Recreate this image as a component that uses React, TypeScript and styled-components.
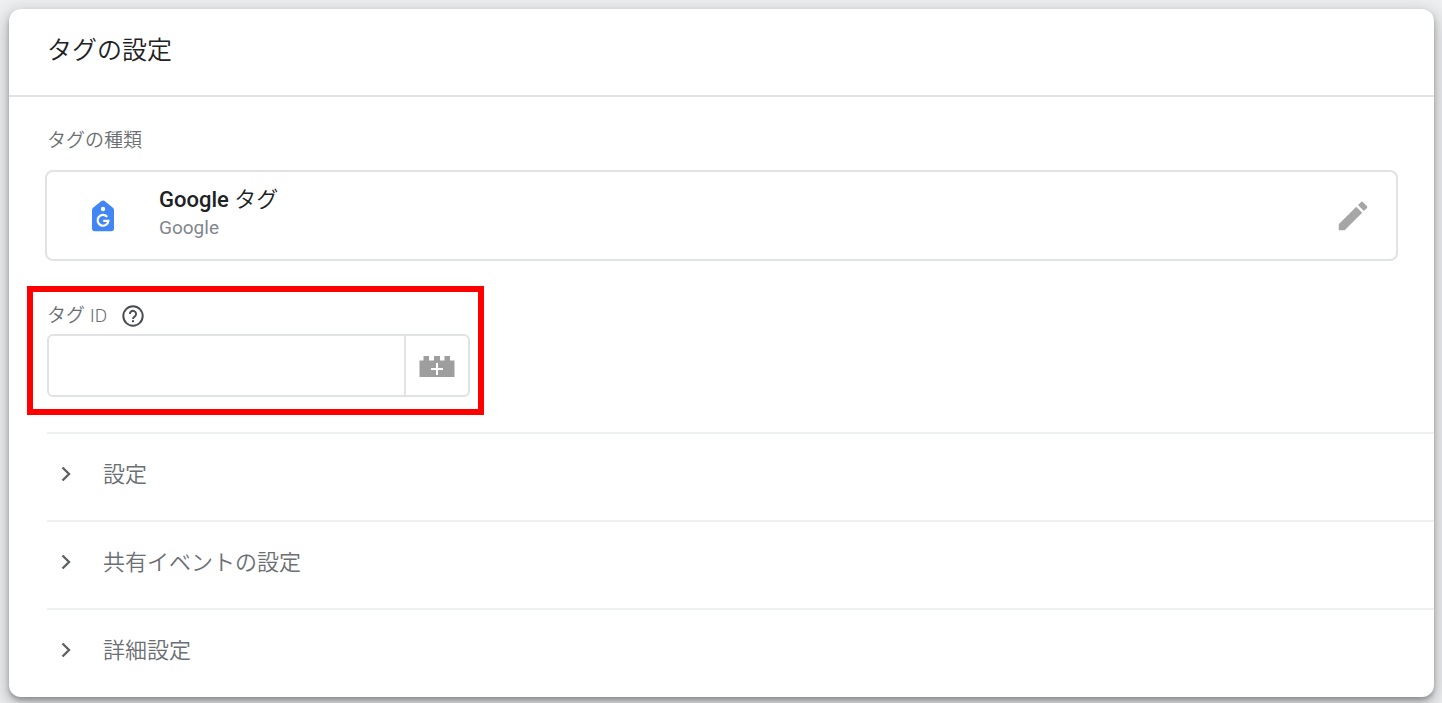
import React from "react";
import styled, { createGlobalStyle } from "styled-components";

const GlobalStyle = createGlobalStyle`
  *, *::before, *::after { box-sizing: border-box; }
  body {
    margin: 0;
    background: #eff0f2;
    font-family: Roboto, "Noto Sans CJK JP", sans-serif;
    font-weight: 350;
    color: #202124;
  }
  button, input { font: inherit; color: inherit; }
`;

const Page = styled.main`
  padding: 9px 8px 6px 9px;
`;

const Card = styled.section`
  background: #fff;
  border-radius: 12px;
  box-shadow: 0 3px 4px rgba(60, 64, 67, 0.35), 0 6px 18px 2px rgba(60, 64, 67, 0.35);
  overflow: hidden;
`;

const Header = styled.header`
  display: flex;
  align-items: center;
  height: 88px;
  padding: 0 38px 2px;
  border-bottom: 2px solid #e1e2e6;
`;

const Title = styled.h1`
  margin: 0;
  font-size: 25px;
  line-height: 36px;
  font-weight: 350;
`;

const TypeBlock = styled.div`
  padding: 30px 36px 0;
`;

const Label = styled.label`
  font-size: 19px;
  line-height: 28px;
  color: #6b6f73;
`;

const TypeLabel = styled.div`
  padding-left: 2px;
  margin-bottom: 15px;
  font-size: 19px;
  line-height: 28px;
  color: #6b6f73;
`;

const TypeButton = styled.button`
  display: flex;
  align-items: center;
  width: 100%;
  height: 91px;
  padding: 0 24px 0 44px;
  border: 2px solid #e1e2e6;
  border-radius: 8px;
  background: #fff;
  text-align: left;
  cursor: pointer;
`;

const TypeText = styled.span`
  display: flex;
  flex: 1;
  flex-direction: column;
  margin-left: 44px;
  padding-bottom: 6px;
`;

const TypeName = styled.span`
  font-size: 22px;
  line-height: 30px;
  color: #202124;

  b { font-weight: 500; }
`;

const TypeVendor = styled.span`
  font-size: 19px;
  line-height: 26px;
  font-weight: 400;
  color: #80868b;
`;

const Field = styled.div`
  width: 457px;
  max-width: calc(100% - 36px);
  margin: 25px 18px 17px;
  padding: 10px 8px 12px 14px;
  border: 6px solid #f00;
`;

const FieldHead = styled.div`
  display: flex;
  align-items: center;
  gap: 14px;
  margin-bottom: 4px;
`;

const HelpButton = styled.button`
  display: flex;
  padding: 0;
  border: 0;
  background: none;
  cursor: pointer;
`;

const InputGroup = styled.div`
  display: flex;
  height: 63px;
  border: 2px solid #e1e2e6;
  border-radius: 6px;
`;

const TextInput = styled.input`
  flex: 1;
  min-width: 0;
  padding: 0 16px;
  border: 0;
  border-radius: 6px;
  background: transparent;
  font-size: 22px;
`;

const VariableButton = styled.button`
  display: flex;
  align-items: center;
  justify-content: center;
  width: 64px;
  padding: 0;
  border: 0;
  border-left: 2px solid #e1e2e6;
  background: none;
  cursor: pointer;
`;

const Sections = styled.div`
  margin-left: 38px;
  padding-bottom: 1px;
`;

const SectionButton = styled.button`
  display: flex;
  align-items: center;
  gap: 31px;
  width: 100%;
  height: 88px;
  padding: 0 13px 4px;
  border: 0;
  border-top: 2px solid #eeeff1;
  background: none;
  font-size: 22px;
  line-height: 32px;
  color: #6b6f73;
  text-align: left;
  cursor: pointer;

  svg { margin-bottom: 2px; }
`;

const TagIcon = () => (
  <svg width="24" height="32" viewBox="0 0 24 32" aria-hidden="true">
    <path d="M12 0.5c.8 0 1.3.3 1.900.8l8 6.500c.7.6 1.100 1.300 1.100 2.200v18.500c0 1.700-1.100 2.700-2.700 2.700H3.700C2.100 31.200 1 30.200 1 28.500V10c0-.9.4-1.600 1.100-2.200l8-6.500c.6-.5 1.100-.8 1.900-.8z" fill="#4285f4" />
    <circle cx="12" cy="9" r="2.200" fill="#fff" />
    <path d="M16.200 16.900a5.400 5.400 0 1 0 1.200 3.900H12.200" fill="none" stroke="#fff" strokeWidth="2.200" />
  </svg>
);

const PencilIcon = () => (
  <svg width="38" height="38" viewBox="0 0 24 24" fill="#a6a6a6" aria-hidden="true">
    <path d="M3 17.250V21h3.750L17.810 9.940l-3.750-3.750L3 17.250zM20.710 7.040c.39-.39.39-1.020 0-1.410l-2.340-2.340c-.39-.39-1.020-.39-1.410 0l-1.830 1.830 3.750 3.750 1.830-1.830z" />
  </svg>
);

const HelpIcon = () => (
  <svg width="24" height="24" viewBox="0 0 24 24" fill="none" aria-hidden="true">
    <circle cx="12" cy="12" r="9.700" stroke="#4a4e52" strokeWidth="2" />
    <path d="M8.900 10a3.100 3.100 0 1 1 5.200 2.200c-1.200 1-2.100 1.500-2.100 2.900" stroke="#4a4e52" strokeWidth="1.900" />
    <rect x="11" y="16.200" width="2" height="2" fill="#4a4e52" />
  </svg>
);

const BrickIcon = () => (
  <svg width="36" height="22" viewBox="0 0 36 22" aria-hidden="true">
    <path d="M0.500 5.500h4V1H10v4.500h5V1h6v4.500h4.500V1h5.500v4.500h4.500V22h-35z" fill="#9e9e9e" />
    <path d="M18 8v12M12 14h12" stroke="#fff" strokeWidth="2" />
  </svg>
);

const ChevronIcon = () => (
  <svg width="12" height="16" viewBox="0 0 12 16" fill="none" aria-hidden="true">
    <path d="M2.500 1.500L9 8l-6.500 6.500" stroke="#5f6368" strokeWidth="2.400" />
  </svg>
);

const sections = ["設定", "共有イベントの設定", "詳細設定"];

export default function App() {
  return (
    <>
      <GlobalStyle />
      <Page lang="ja">
        <Card>
          <Header>
            <Title>タグの設定</Title>
          </Header>
          <TypeBlock>
            <TypeLabel>タグの種類</TypeLabel>
            <TypeButton type="button">
              <TagIcon />
              <TypeText>
                <TypeName><b>Google</b> タグ</TypeName>
                <TypeVendor>Google</TypeVendor>
              </TypeText>
              <PencilIcon />
            </TypeButton>
          </TypeBlock>
          <Field>
            <FieldHead>
              <Label htmlFor="tag-id">タグ ID</Label>
              <HelpButton type="button" aria-label="ヘルプ">
                <HelpIcon />
              </HelpButton>
            </FieldHead>
            <InputGroup>
              <TextInput id="tag-id" type="text" />
              <VariableButton type="button" aria-label="変数を選択">
                <BrickIcon />
              </VariableButton>
            </InputGroup>
          </Field>
          <Sections>
            {sections.map((name) => (
              <SectionButton key={name} type="button" aria-expanded={false}>
                <ChevronIcon />
                {name}
              </SectionButton>
            ))}
          </Sections>
        </Card>
      </Page>
    </>
  );
}
